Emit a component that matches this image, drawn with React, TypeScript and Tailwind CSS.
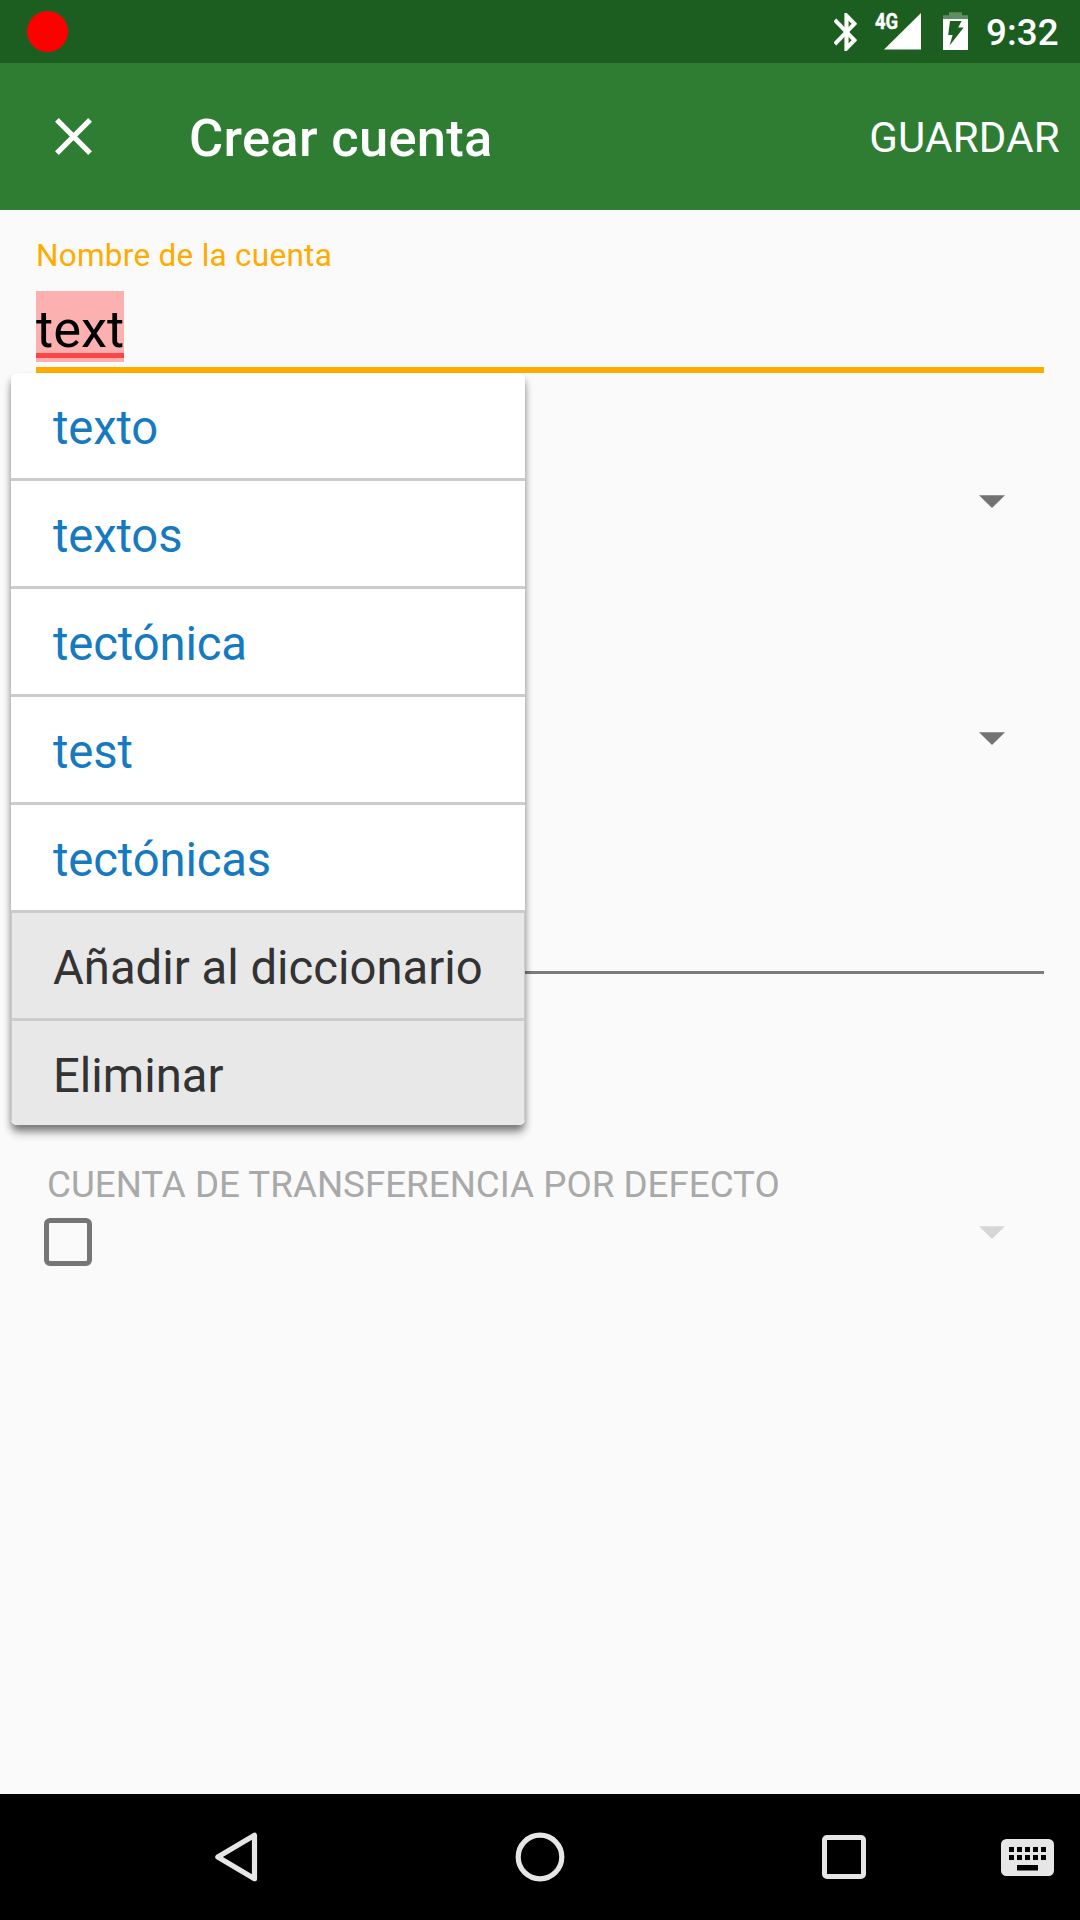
import React from "react";

const suggestions = ["texto", "textos", "tectónica", "test", "tectónicas"];
const actions = ["Añadir al diccionario", "Eliminar"];

function Caret({ className }: { className: string }) {
  return (
    <svg width="26" height="13" viewBox="0 0 26 13" className={className}>
      <path d="M0 0.3H26L13 13Z" fill="currentColor" />
    </svg>
  );
}

function StatusBar() {
  return (
    <div className="flex h-[63px] shrink-0 items-start bg-[#1b5e20] pl-[27px] text-white">
      <div className="mt-[11px] h-[41px] w-[41px] rounded-full bg-[#ff0000]" />
      <svg width="23" height="38" viewBox="5.2 2 12.5 20" preserveAspectRatio="none" className="mt-[13px] ml-[766px] shrink-0">
        <path
          fill="currentColor"
          stroke="currentColor"
          strokeWidth="0.25"
          d="M17.71 7.71L12 2h-1v7.59L6.41 5 5 6.41 10.59 12 5 17.59 6.41 19 11 14.41V22h1l5.71-5.71-4.3-4.29 4.3-4.29zM13 5.83l1.88 1.88L13 9.59V5.83zm1.88 10.46L13 18.17v-3.76l1.88 1.88z"
        />
      </svg>
      <div className="relative mt-[13px] ml-[18px] h-[37px] w-[46px] shrink-0">
        <span className="absolute -top-[2px] left-0 origin-left scale-x-[0.86] text-[21.5px] leading-[22px] font-bold [-webkit-text-stroke:0.4px_white]">4G</span>
        <svg width="37" height="37" viewBox="0 0 37 37" className="absolute top-0 right-0">
          <path d="M37 0V36.5H0Z" fill="currentColor" />
        </svg>
      </div>
      <svg width="25" height="38" viewBox="0 0 25 38" className="mt-[12px] ml-[22px] shrink-0">
        <path d="M6 0.3H19V3.3H25V7H0V3.3H6Z" fill="currentColor" opacity="0.3" />
        <path fillRule="evenodd" fill="currentColor" d="M0 7H25V38H0ZM7 9L5.2 23H9.6L6.6 33.5L20.7 15.5H15.2L18.6 9Z" />
      </svg>
      <span className="mt-[10px] ml-[18px] text-[36.75px] leading-[46px] font-medium tracking-[0.1px]">9:32</span>
    </div>
  );
}

function AppBar() {
  return (
    <header className="flex h-[147px] shrink-0 items-center bg-[#2e7d32] pl-[55px] text-white">
      <svg width="37" height="37" viewBox="0 0 37 37" className="shrink-0">
        <path d="M1.9 1.9L35.1 35.1M35.1 1.9L1.9 35.1" stroke="currentColor" strokeWidth="5.2" />
      </svg>
      <h1 className="mt-[2px] ml-[97px] text-[52.5px] leading-[62px] font-medium tracking-[0.3px]">Crear cuenta</h1>
      <button className="mt-[2px] mr-[20px] ml-auto text-[42px] leading-[50px] tracking-[0.25px]">GUARDAR</button>
    </header>
  );
}

function SuggestionMenu() {
  return (
    <div className="absolute top-[163px] left-[11px] h-[752px] w-[514px] rounded-[6px] shadow-[0_8px_10px_-1px_rgba(0,0,0,0.42),0_4px_6px_rgba(0,0,0,0.2)]">
      <ul className="h-full overflow-hidden rounded-[6px] bg-white text-[47.25px] leading-[56px]">
        {suggestions.map((word) => (
          <li key={word} className="flex h-[108px] items-center border-b-[3px] border-[#cccccc] pt-[5px] pl-[42px] tracking-[-0.15px] whitespace-nowrap text-[#167ac0]">
            {word}
          </li>
        ))}
        {actions.map((label) => (
          <li key={label} className="flex h-[108px] items-center border-x border-b-[3px] border-[#cccccc] bg-[#e8e8e8] pt-[5px] pl-[41px] whitespace-nowrap text-[#333333]">
            {label}
          </li>
        ))}
      </ul>
    </div>
  );
}

function NavBar() {
  return (
    <nav className="flex h-[126px] shrink-0 items-center bg-black pl-[214px] text-[#e6e6e6]">
      <svg width="44" height="52" viewBox="0 0 44 52" className="shrink-0">
        <path d="M40.5 4.3V47.7L3.8 26Z" fill="none" stroke="currentColor" strokeWidth="5.2" strokeLinejoin="round" />
      </svg>
      <svg width="50" height="50" viewBox="0 0 50 50" className="ml-[257px] shrink-0">
        <circle cx="25" cy="25" r="21.8" fill="none" stroke="currentColor" strokeWidth="5.2" />
      </svg>
      <div className="ml-[257px] h-[44px] w-[44px] shrink-0 rounded-[5px] border-[5px] border-current" />
      <svg width="53" height="37" viewBox="0 0 53 37" className="mt-px ml-[135px] shrink-0">
        <rect width="53" height="37" rx="5.5" fill="currentColor" />
        {[8, 16, 24, 32, 40].map((x) => (
          <path key={x} d={`M${x} 8h5v5h-5zM${x} 16h5v5h-5z`} fill="black" />
        ))}
        <rect x="16" y="26" width="21" height="5.5" fill="black" />
      </svg>
    </nav>
  );
}

export default function App() {
  return (
    <div className="flex h-[1920px] w-[1080px] flex-col overflow-hidden bg-[#fafafa] font-['Roboto',sans-serif]">
      <StatusBar />
      <AppBar />
      <main className="relative flex-1">
        <div className="px-[36px] pt-[27px]">
          <label className="block text-[31.5px] leading-[38px] tracking-[0.27px] text-[#ffab00]">Nombre de la cuenta</label>
          <div className="mt-[16px] flex h-[71px] w-[88px] flex-col bg-[#fcb0b0] text-[52.5px] text-black">
            <span className="mt-[6px] h-[56px] leading-[64px]">text</span>
            <span className="h-[5px] bg-[#ff4444]" />
          </div>
          <div className="mt-[5px] h-[6px] bg-[#ffab00]" />
        </div>
        <div className="mt-[122px] flex h-[13px] justify-end pr-[75px]">
          <Caret className="text-[#737373]" />
        </div>
        <div className="mt-[224px] flex h-[13px] justify-end pr-[75px]">
          <Caret className="text-[#737373]" />
        </div>
        <div className="mx-[36px] mt-[226px] h-[3px] bg-[#7b7b7b]" />
        <p className="mt-[189px] ml-[47px] text-[36.75px] leading-[44px] text-[#a9a9a9]">CUENTA DE TRANSFERENCIA POR DEFECTO</p>
        <div className="mt-[11px] flex h-[48px] justify-between pr-[75px] pl-[44px]">
          <div className="h-[48px] w-[48px] rounded-[6px] border-[5.5px] border-[#757575]" />
          <Caret className="mt-[8px] text-[#d6d6d6]" />
        </div>
        <SuggestionMenu />
      </main>
      <NavBar />
    </div>
  );
}
